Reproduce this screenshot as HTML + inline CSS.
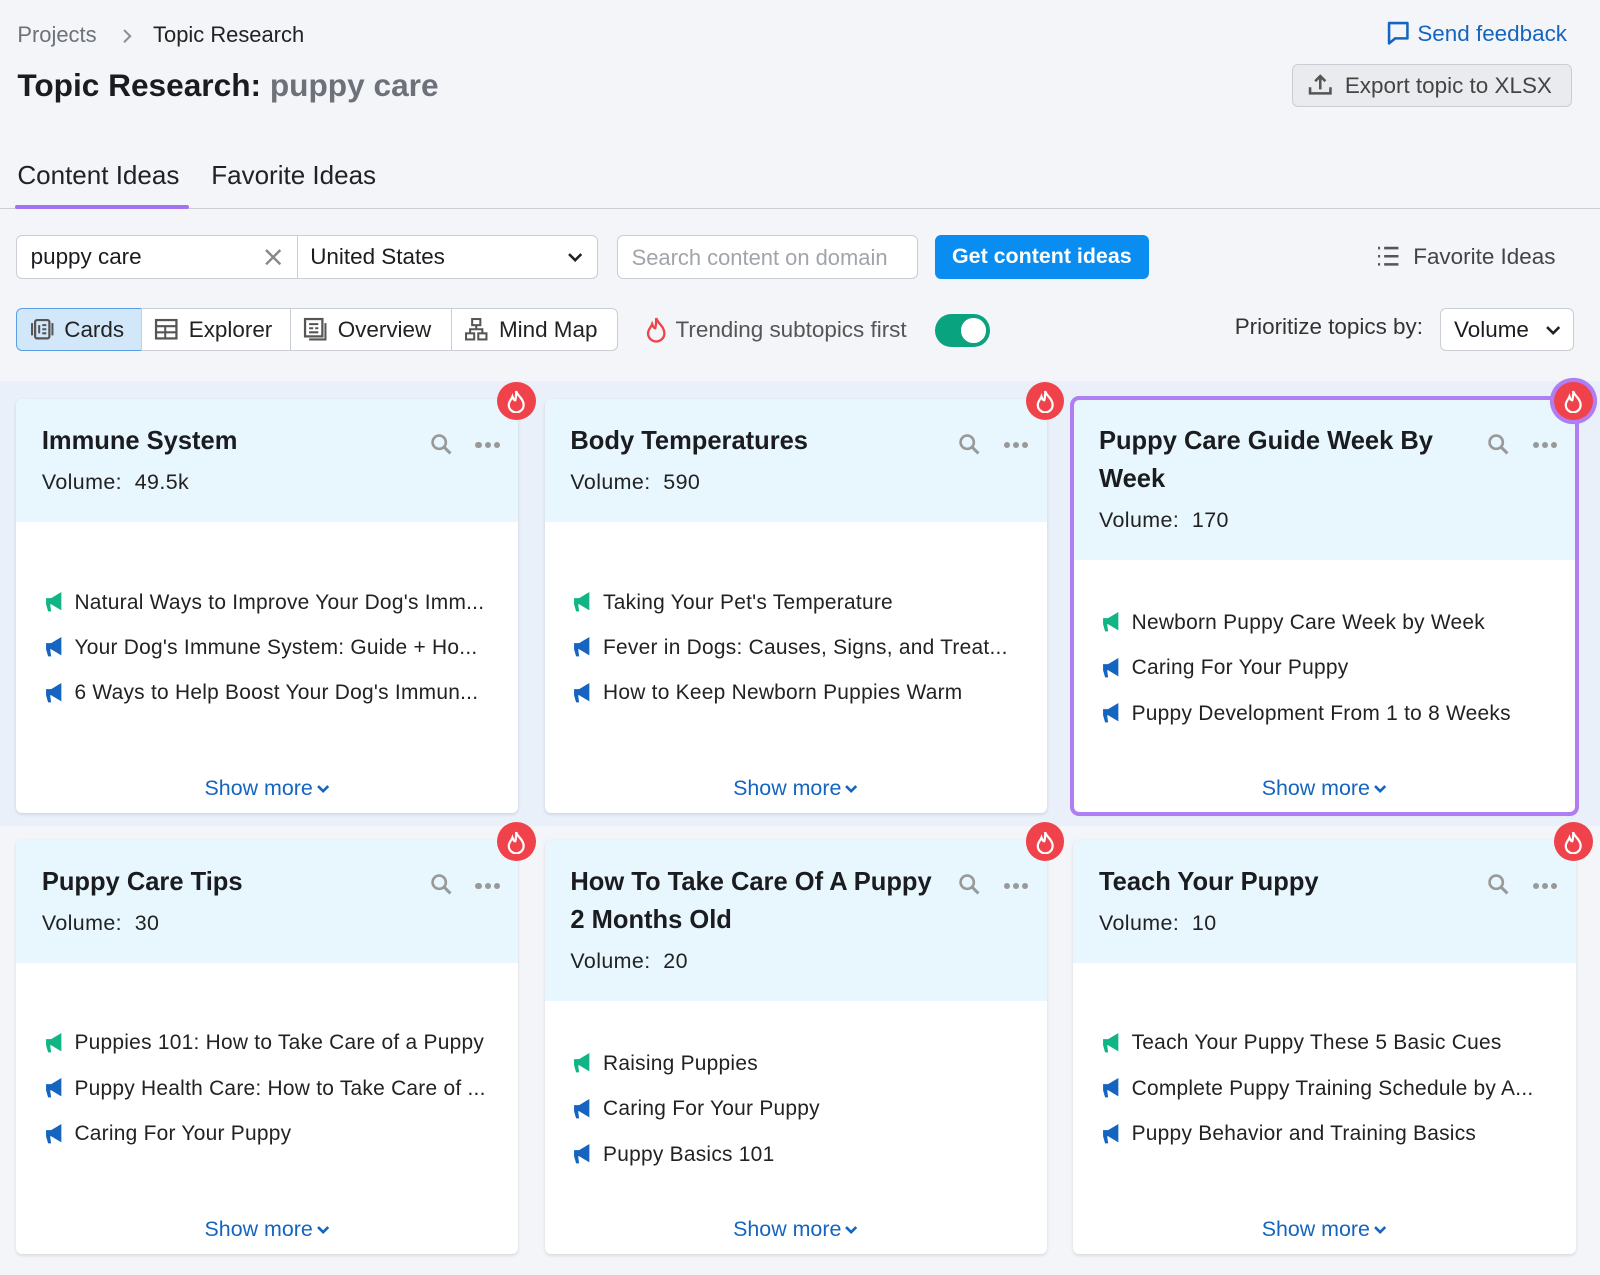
<!DOCTYPE html>
<html><head><meta charset="utf-8"><style>
*{box-sizing:border-box;margin:0;padding:0}
html,body{width:1600px;height:1275px;overflow:hidden;background:#f4f5f9}
body{font-family:"Liberation Sans",Arial,sans-serif;color:#1a1c20}
#w{zoom:1.020408;width:1568px;height:1250px;position:relative}
.a{position:absolute;white-space:nowrap}
.band{position:absolute;left:0;top:373px;width:1568px;height:436px;background:#e9f0fa}
.card{position:absolute;width:492px;height:406px;background:#fff;border-radius:6px;box-shadow:0 1px 3px rgba(0,0,0,.12)}
.hd{background:#e8f6fe;padding:24px 25px 20px;border-radius:6px 6px 0 0}
.t{font-size:25px;font-weight:bold;line-height:37px;width:370px}
.v{font-size:21px;letter-spacing:.4px;line-height:37px;margin-top:3px;color:#222}
.ul{list-style:none;margin-top:56px;padding-left:26px}
.ul.m2{margin-top:39px}
.ul li{font-size:20.5px;letter-spacing:.25px;line-height:44.5px;color:#222;display:flex;align-items:center;white-space:nowrap}
.ul li svg{margin-right:9px;flex:none}
.sm{position:absolute;left:0;right:0;bottom:12px;text-align:center;font-size:21px;color:#1565c0}
.sm svg{vertical-align:middle;margin-left:3px}
.ic{position:absolute;top:32px}
.dt{position:absolute;left:450px;top:42px;display:flex;gap:3px}
.dt i{width:6px;height:6px;border-radius:50%;background:#999;display:block}
.fl{position:absolute;width:38px;height:38px;border-radius:50%;background:#f0424a;right:-17px;top:-17px;display:flex;align-items:center;justify-content:center}
.vt{position:absolute;top:302px;height:42px;border:1px solid #c9cdd4;background:#fff;display:flex;align-items:center;font-size:22px;color:#222}
.vt svg{margin:0 10px 0 12px}
</style></head><body><div id="w">
<div class="a" style="left:17px;top:22px;font-size:21.5px;color:#6c717a">Projects</div>
<svg class="a" style="left:119px;top:27px" width="12" height="16" viewBox="0 0 12 16"><path d="M3 2l6 6-6 6" fill="none" stroke="#8a8f98" stroke-width="2"/></svg>
<div class="a" style="left:150px;top:22px;font-size:21.5px;color:#222">Topic Research</div>
<div class="a" style="left:17px;top:66px;font-size:31px;font-weight:bold">Topic Research: <span style="color:#6c717a">puppy care</span></div>
<div class="a" style="left:1358px;top:20px;font-size:22px;color:#1565c0;display:flex;align-items:center"><svg width="24" height="26" viewBox="0 0 24 26"><path d="M3 3h18v15H9l-6 5z" fill="none" stroke="#1565c0" stroke-width="2.5" stroke-linejoin="round"/></svg><span style="margin-left:7px">Send feedback</span></div>
<div class="a" style="left:1266px;top:63px;width:275px;height:42px;background:#e9ebef;border:1px solid #c9cdd4;border-radius:6px;font-size:22px;color:#444;display:flex;align-items:center"><svg width="26" height="24" viewBox="0 0 26 24" style="margin:0 11px 0 14px"><path d="M13 16V3M8 8l5-5 5 5M3 14v6h20v-6" fill="none" stroke="#555" stroke-width="2.5"/></svg>Export topic to XLSX</div>
<div class="a" style="left:17px;top:157px;font-size:25.5px;color:#222">Content Ideas</div>
<div class="a" style="left:207px;top:157px;font-size:25.5px;color:#222">Favorite Ideas</div>
<div class="a" style="left:0;top:204px;width:1568px;height:1px;background:#c9cdd4"></div>
<div class="a" style="left:15px;top:201px;width:170px;height:4px;background:#a471f0;border-radius:2px"></div>
<div class="a" style="left:16px;top:230px;width:570px;height:43px;background:#fff;border:1px solid #c9cdd4;border-radius:6px"></div>
<div class="a" style="left:291px;top:231px;width:1px;height:41px;background:#c9cdd4"></div>
<div class="a" style="left:30px;top:239px;font-size:22px">puppy care</div>
<svg class="a" style="left:259px;top:243px" width="18" height="18" viewBox="0 0 18 18"><path d="M2 2l14 14M16 2L2 16" stroke="#888" stroke-width="2.4"/></svg>
<div class="a" style="left:304px;top:239px;font-size:22px">United States</div>
<svg class="a" style="left:556px;top:246px" width="16" height="12" viewBox="0 0 16 12"><path d="M2 3l6 6 6-6" fill="none" stroke="#222" stroke-width="2.5"/></svg>
<div class="a" style="left:605px;top:230px;width:295px;height:43px;background:#fff;border:1px solid #c9cdd4;border-radius:6px;font-size:21.5px;color:#a0a4ab;padding:9px 13px">Search content on domain</div>
<div class="a" style="left:916px;top:230px;width:210px;height:43px;background:#0a8df0;border-radius:6px;font-size:21px;color:#fff;font-weight:bold;text-align:center;line-height:43px">Get content ideas</div>
<svg class="a" style="left:1348px;top:240px" width="24" height="22" viewBox="0 0 24 22"><path d="M2 3h2M8 3h14M2 11h2M8 11h14M2 19h2M8 19h14" stroke="#555" stroke-width="2.5"/></svg>
<div class="a" style="left:1385px;top:239px;font-size:22px;color:#444">Favorite Ideas</div>
<div class="vt" style="left:16px;width:123px;background:#d3e7fb;border-color:#5a9fe4;border-radius:6px 0 0 6px"><svg width="24" height="24" viewBox="0 0 24 24"><rect x="5" y="3" width="14" height="18" rx="2" fill="none" stroke="#555" stroke-width="2.2"/><path d="M2 6v12M22 6v12M9 8v8M12 8h4M12 12h4M12 16h4" stroke="#555" stroke-width="2"/></svg>Cards</div>
<div class="vt" style="left:138px;width:147px"><svg width="24" height="24" viewBox="0 0 24 24"><rect x="2" y="3" width="20" height="18" fill="none" stroke="#555" stroke-width="2.2"/><path d="M2 9h20M2 15h20M11 9v12" stroke="#555" stroke-width="2"/></svg>Explorer</div>
<div class="vt" style="left:284px;width:159px"><svg width="24" height="24" viewBox="0 0 24 24"><rect x="2" y="2" width="17" height="17" fill="none" stroke="#555" stroke-width="2.2"/><path d="M22 6v16H6M6 7h9M6 11h4M12 11h3M6 15h9" fill="none" stroke="#555" stroke-width="2"/></svg>Overview</div>
<div class="vt" style="left:442px;width:164px;border-radius:0 6px 6px 0"><svg width="24" height="24" viewBox="0 0 24 24"><rect x="8" y="2" width="8" height="6" fill="none" stroke="#555" stroke-width="2"/><rect x="2" y="16" width="8" height="6" fill="none" stroke="#555" stroke-width="2"/><rect x="14" y="16" width="8" height="6" fill="none" stroke="#555" stroke-width="2"/><path d="M12 8v4M6 16v-4h12v4" fill="none" stroke="#555" stroke-width="2"/></svg>Mind Map</div>
<svg class="a" style="left:632px;top:310px" width="22" height="26" viewBox="0 0 22 26"><path d="M11 2c1 5 8 8 8 15a8 8 0 0 1-16 0c0-4 3-6 4-9 1 3 2 4 3 4 1-3 1-6 1-10z" fill="none" stroke="#f0424a" stroke-width="2.3"/></svg>
<div class="a" style="left:662px;top:311px;font-size:22px;color:#555">Trending subtopics first</div>
<div class="a" style="left:916px;top:308px;width:54px;height:32px;border-radius:16px;background:#0aa37f"><div style="position:absolute;right:4px;top:4px;width:24px;height:24px;border-radius:50%;background:#fff"></div></div>
<div class="a" style="left:1210px;top:308px;font-size:22px;color:#333">Prioritize topics by:</div>
<div class="a" style="left:1411px;top:302px;width:132px;height:42px;background:#fff;border:1px solid #c9cdd4;border-radius:6px;font-size:22px;padding:8px 13px">Volume</div>
<svg class="a" style="left:1514px;top:318px" width="16" height="12" viewBox="0 0 16 12"><path d="M2 3l6 6 6-6" fill="none" stroke="#222" stroke-width="2.5"/></svg>
<div class="band"></div>

<svg width="0" height="0" style="position:absolute"><defs>
<symbol id="mg" viewBox="0 0 22 24"><path d="M3 8h5l10-6v18L8 14H7l1 7H5l-2-7z"/></symbol>
<symbol id="fi" viewBox="0 0 22 26"><path d="M11 2c1 5 8 8 8 15a8 8 0 0 1-16 0c0-4 3-6 4-9 1 3 2 4 3 4 1-3 1-6 1-10z" fill="none" stroke="#fff" stroke-width="2.4"/></symbol>
<symbol id="sr" viewBox="0 0 24 24"><circle cx="10" cy="10" r="6.5" fill="none" stroke="#999" stroke-width="2.6"/><path d="M15 15l6 6" stroke="#999" stroke-width="3"/></symbol>
<symbol id="ch" viewBox="0 0 14 10"><path d="M2 2l5 5 5-5" fill="none" stroke="#1565c0" stroke-width="2.6"/></symbol>
</defs></svg>

<div class="card" style="left:16px;top:391px"><div class="hd"><div class="t">Immune System</div><div class="v">Volume:&nbsp; 49.5k</div></div>
<svg class="ic" style="left:404px" width="24" height="24"><use href="#sr"/></svg><div class="dt"><i></i><i></i><i></i></div>
<ul class="ul"><li><svg width="22" height="24" fill="#11b585"><use href="#mg"/></svg>Natural Ways to Improve Your Dog's Imm...</li><li><svg width="22" height="24" fill="#1565c0"><use href="#mg"/></svg>Your Dog's Immune System: Guide + Ho...</li><li><svg width="22" height="24" fill="#1565c0"><use href="#mg"/></svg>6 Ways to Help Boost Your Dog's Immun...</li></ul>
<div class="sm">Show more<svg width="14" height="10"><use href="#ch"/></svg></div><div class="fl"><svg width="20" height="24"><use href="#fi"/></svg></div></div>

<div class="card" style="left:534px;top:391px"><div class="hd"><div class="t">Body Temperatures</div><div class="v">Volume:&nbsp; 590</div></div>
<svg class="ic" style="left:404px" width="24" height="24"><use href="#sr"/></svg><div class="dt"><i></i><i></i><i></i></div>
<ul class="ul"><li><svg width="22" height="24" fill="#11b585"><use href="#mg"/></svg>Taking Your Pet's Temperature</li><li><svg width="22" height="24" fill="#1565c0"><use href="#mg"/></svg>Fever in Dogs: Causes, Signs, and Treat...</li><li><svg width="22" height="24" fill="#1565c0"><use href="#mg"/></svg>How to Keep Newborn Puppies Warm</li></ul>
<div class="sm">Show more<svg width="14" height="10"><use href="#ch"/></svg></div><div class="fl"><svg width="20" height="24"><use href="#fi"/></svg></div></div>

<div class="card" style="left:1052px;top:391px;outline:4px solid #b07ef3;outline-offset:-1px"><div class="hd"><div class="t">Puppy Care Guide Week By Week</div><div class="v">Volume:&nbsp; 170</div></div>
<svg class="ic" style="left:404px" width="24" height="24"><use href="#sr"/></svg><div class="dt"><i></i><i></i><i></i></div>
<ul class="ul m2"><li><svg width="22" height="24" fill="#11b585"><use href="#mg"/></svg>Newborn Puppy Care Week by Week</li><li><svg width="22" height="24" fill="#1565c0"><use href="#mg"/></svg>Caring For Your Puppy</li><li><svg width="22" height="24" fill="#1565c0"><use href="#mg"/></svg>Puppy Development From 1 to 8 Weeks</li></ul>
<div class="sm">Show more<svg width="14" height="10"><use href="#ch"/></svg></div><div class="fl" style="box-shadow:0 0 0 4px #b07ef3"><svg width="20" height="24"><use href="#fi"/></svg></div></div>

<div class="card" style="left:16px;top:823px"><div class="hd"><div class="t">Puppy Care Tips</div><div class="v">Volume:&nbsp; 30</div></div>
<svg class="ic" style="left:404px" width="24" height="24"><use href="#sr"/></svg><div class="dt"><i></i><i></i><i></i></div>
<ul class="ul"><li><svg width="22" height="24" fill="#11b585"><use href="#mg"/></svg>Puppies 101: How to Take Care of a Puppy</li><li><svg width="22" height="24" fill="#1565c0"><use href="#mg"/></svg>Puppy Health Care: How to Take Care of ...</li><li><svg width="22" height="24" fill="#1565c0"><use href="#mg"/></svg>Caring For Your Puppy</li></ul>
<div class="sm">Show more<svg width="14" height="10"><use href="#ch"/></svg></div><div class="fl"><svg width="20" height="24"><use href="#fi"/></svg></div></div>

<div class="card" style="left:534px;top:823px"><div class="hd"><div class="t" style="width:360px">How To Take Care Of A Puppy 2 Months Old</div><div class="v">Volume:&nbsp; 20</div></div>
<svg class="ic" style="left:404px" width="24" height="24"><use href="#sr"/></svg><div class="dt"><i></i><i></i><i></i></div>
<ul class="ul m2"><li><svg width="22" height="24" fill="#11b585"><use href="#mg"/></svg>Raising Puppies</li><li><svg width="22" height="24" fill="#1565c0"><use href="#mg"/></svg>Caring For Your Puppy</li><li><svg width="22" height="24" fill="#1565c0"><use href="#mg"/></svg>Puppy Basics 101</li></ul>
<div class="sm">Show more<svg width="14" height="10"><use href="#ch"/></svg></div><div class="fl"><svg width="20" height="24"><use href="#fi"/></svg></div></div>

<div class="card" style="left:1052px;top:823px"><div class="hd"><div class="t">Teach Your Puppy</div><div class="v">Volume:&nbsp; 10</div></div>
<svg class="ic" style="left:404px" width="24" height="24"><use href="#sr"/></svg><div class="dt"><i></i><i></i><i></i></div>
<ul class="ul"><li><svg width="22" height="24" fill="#11b585"><use href="#mg"/></svg>Teach Your Puppy These 5 Basic Cues</li><li><svg width="22" height="24" fill="#1565c0"><use href="#mg"/></svg>Complete Puppy Training Schedule by A...</li><li><svg width="22" height="24" fill="#1565c0"><use href="#mg"/></svg>Puppy Behavior and Training Basics</li></ul>
<div class="sm">Show more<svg width="14" height="10"><use href="#ch"/></svg></div><div class="fl"><svg width="20" height="24"><use href="#fi"/></svg></div></div>
</div></body></html>
